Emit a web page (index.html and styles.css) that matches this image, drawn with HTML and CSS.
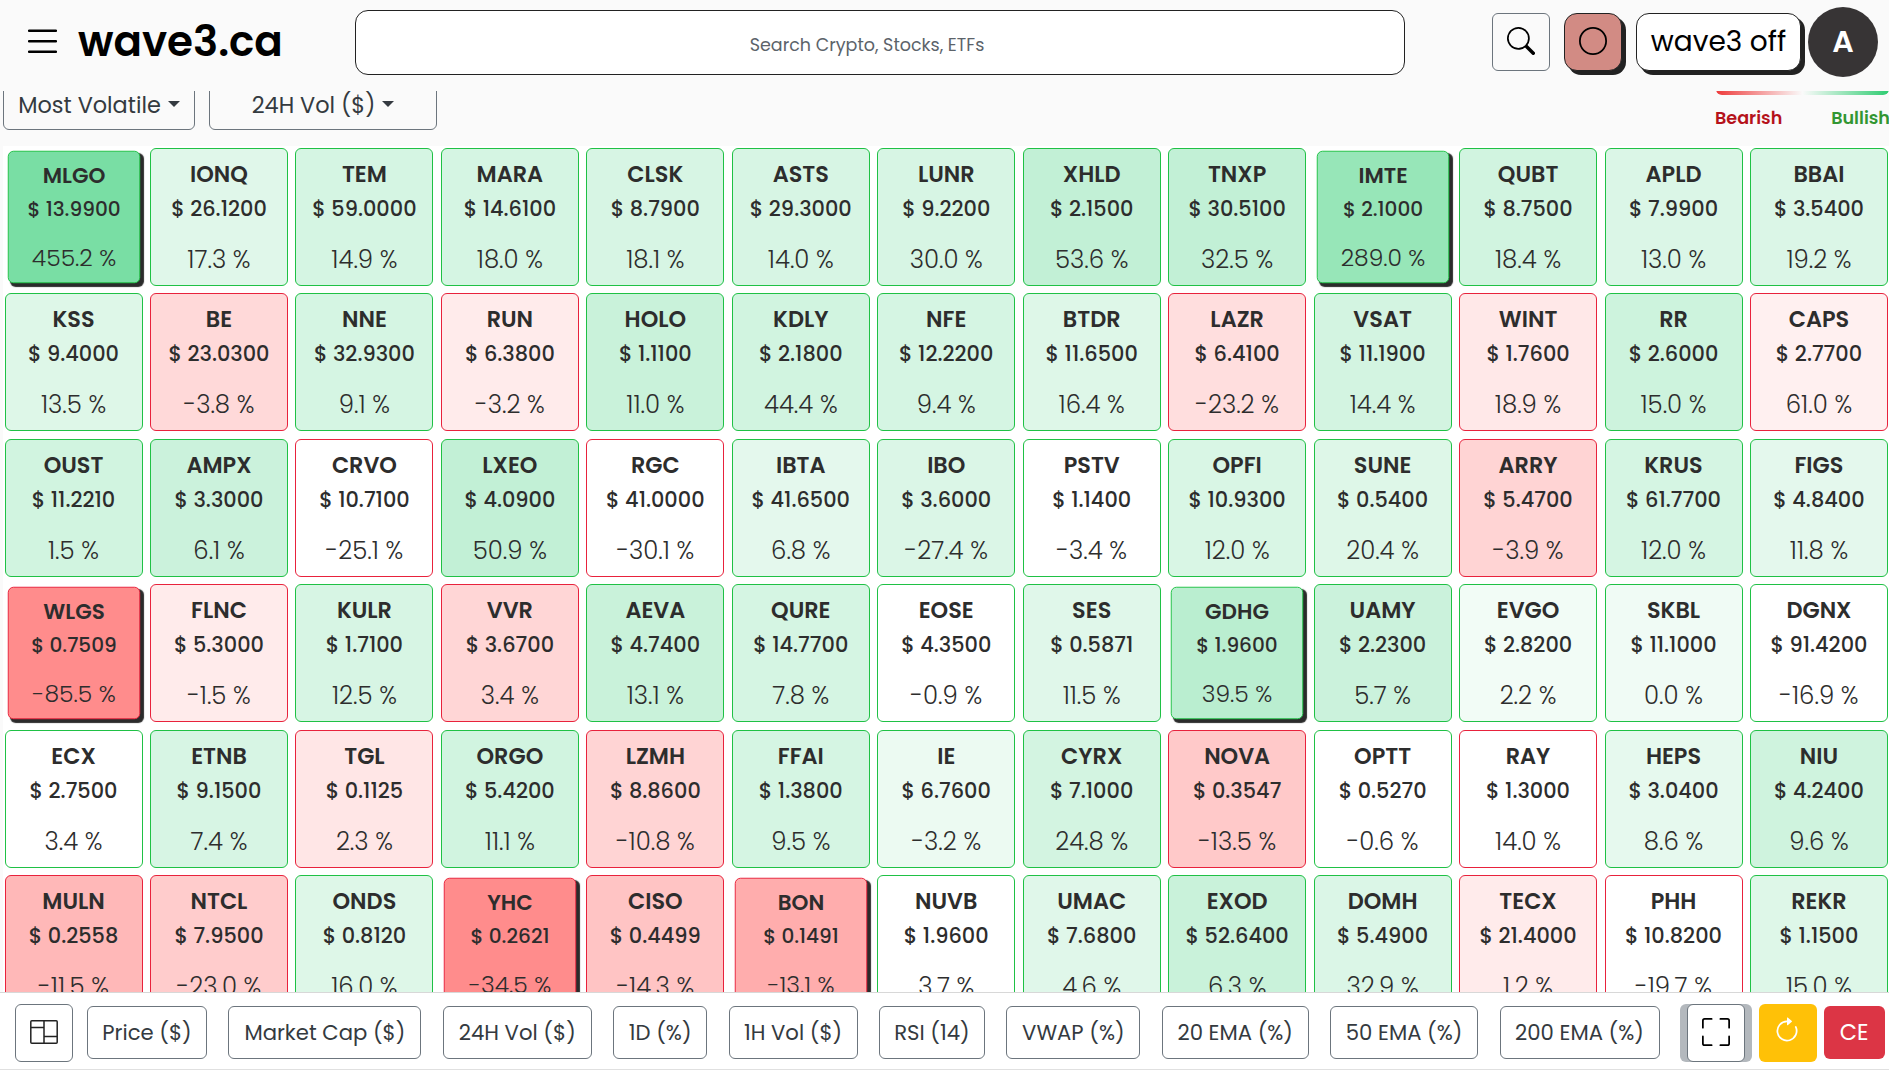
FILE: index.html
```
<!DOCTYPE html>
<html lang="en">
<head>
    <meta charset="UTF-8">
    <meta name="viewport" content="width=device-width, initial-scale=1.0">
    <title>wave3.ca</title>
    <link rel="stylesheet" href="styles.css">
</head>
<body>

<header class="topbar">
    <button class="menu-btn">
        <svg width="29" height="25" viewBox="0 0 29 25"><path d="M1 1.7h27M1 12.2h27M1 22.7h27" stroke="#000" stroke-width="2.4" stroke-linecap="round"/></svg>
    </button>
    <h1 class="logo">wave3.ca</h1>
    <input class="search" type="text" placeholder="Search Crypto, Stocks, ETFs">
    <div class="actions">
        <button class="icon-btn search-btn">
            <svg width="28" height="28" viewBox="0 0 16 16"><path d="M11.742 10.344a6.5 6.5 0 1 0-1.397 1.398h-.001q.044.06.098.115l3.85 3.85a1 1 0 0 0 1.415-1.414l-3.85-3.85a1 1 0 0 0-.115-.1zM12 6.5a5.5 5.5 0 1 1-11 0 5.5 5.5 0 0 1 11 0"/></svg>
        </button>
        <button class="toggle">
            <svg width="28" height="28" viewBox="0 0 16 16"><path d="M8 15A7 7 0 1 1 8 1a7 7 0 0 1 0 14m0 1A8 8 0 1 0 8 0a8 8 0 0 0 0 16"/></svg>
        </button>
        <button class="wave-btn">wave3 off</button>
        <div class="avatar">A</div>
    </div>
</header>

<main class="board">
    <div class="filters">
        <button class="dropdown">Most Volatile</button>
        <button class="dropdown wide">24H Vol ($)</button>
        <div class="legend">
            <div class="legend-bar"></div>
            <div class="legend-text">
                <span class="bearish">Bearish</span>
                <span class="bullish">Bullish</span>
            </div>
        </div>
    </div>
    <div class="heatmap" id="heatmap"></div>
</main>

<footer class="bottombar">
    <button class="icon-btn layout-btn">
        <svg width="28" height="24" viewBox="0 0 28 24" fill="none" stroke="#222" stroke-width="1.5"><rect x=".8" y=".8" width="26.4" height="22.4" rx="1"/><path d="M14 1v22M1 7.500h13M14 16.500h13"/></svg>
    </button>
    <div class="columns">
        <button>Price ($)</button>
        <button>Market Cap ($)</button>
        <button>24H Vol ($)</button>
        <button>1D (%)</button>
        <button>1H Vol ($)</button>
        <button>RSI (14)</button>
        <button>VWAP (%)</button>
        <button>20 EMA (%)</button>
        <button>50 EMA (%)</button>
        <button>200 EMA (%)</button>
    </div>
    <div class="fullscreen">
        <button class="icon-btn">
            <svg width="28" height="28" viewBox="0 0 16 16"><path d="M1.5 1a.5.5 0 0 0-.5.5v4a.5.5 0 0 1-1 0v-4A1.5 1.5 0 0 1 1.500 0h4a.5.5 0 0 1 0 1zM10 .5a.5.5 0 0 1 .5-.5h4A1.500 1.500 0 0 1 16 1.500v4a.5.5 0 0 1-1 0v-4a.5.5 0 0 0-.5-.5h-4a.5.5 0 0 1-.5-.5M.5 10a.5.5 0 0 1 .5.5v4a.5.5 0 0 0 .5.5h4a.5.5 0 0 1 0 1h-4A1.500 1.500 0 0 1 0 14.500v-4a.5.5 0 0 1 .5-.5m15 0a.5.5 0 0 1 .5.5v4a1.500 1.500 0 0 1-1.500 1.500h-4a.5.5 0 0 1 0-1h4a.5.5 0 0 0 .5-.5v-4a.5.5 0 0 1 .5-.5"/></svg>
        </button>
    </div>
    <button class="refresh">
        <svg width="28" height="28" viewBox="0 0 16 16" fill="#fff"><path d="M8 3a5 5 0 1 0 4.546 2.914.5.5 0 0 1 .908-.417A6 6 0 1 1 8 2z"/><path d="M8 4.466V.534a.25.25 0 0 1 .41-.192l2.360 1.966c.12.1.12.284 0 .384L8.410 4.658A.25.25 0 0 1 8 4.466"/></svg>
    </button>
    <button class="clear">CE</button>
</footer>

<script src="script.js"></script>
</body>
</html>
```
FILE: styles.css
```
* {
    box-sizing: border-box;
}

body {
    margin: 0;
    height: 100vh;
    display: flex;
    flex-direction: column;
    overflow: hidden;
    background-color: #fafafa;
    font-family: Poppins, Inter, sans-serif;
    color: #212529;
}

button, input {
    font: inherit;
    color: inherit;
    margin: 0;
    padding: 0;
}

svg {
    display: block;
}

/* top bar */
.topbar {
    flex: none;
    height: 91px;
    display: flex;
    align-items: flex-start;
    padding: 7px 11px 0 28px;
}

.menu-btn {
    margin-top: 22px;
    border: none;
    background: none;
}

.logo {
    width: 277px;
    margin: 8px 0 0 21px;
    font-size: 42px;
    font-weight: 600;
    line-height: 53px;
    color: #000;
}

.search {
    width: 1050px;
    height: 65px;
    margin-top: 3px;
    padding-right: 26px;
    padding-top: 4px;
    border: 1px solid #222;
    border-radius: 13px;
    background-color: #fff;
    font-size: 17.5px;
    text-align: center;
}

.search::placeholder {
    color: #5c636a;
}

.actions {
    display: flex;
    margin-left: auto;
}

.icon-btn {
    width: 58px;
    height: 58px;
    display: flex;
    align-items: center;
    justify-content: center;
    padding-bottom: 3px;
    border: 1px solid #6c757d;
    border-radius: 6px;
    background-color: #fff;
}

.search-btn {
    margin: 6px 14px 0 0;
    padding-bottom: 2px;
    background-color: #fafafa;
}

.toggle {
    width: 58px;
    height: 58px;
    display: flex;
    align-items: center;
    justify-content: center;
    margin: 6px 14px 0 0;
    padding-bottom: 2px;
    border: 1px solid #222;
    border-radius: 13px;
    background-color: #d28b84;
    box-shadow: 4px 4px 0 #222;
}

.wave-btn {
    width: 165px;
    height: 58px;
    margin: 6px 7px 0 0;
    border: 1px solid #222;
    border-radius: 13px;
    background-color: #fff;
    box-shadow: 4px 4px 0 #222;
    color: #000;
    font-size: 28px;
}

.avatar {
    width: 70px;
    height: 70px;
    border-radius: 50%;
    background-color: #373435;
    color: #fff;
    font-size: 30px;
    font-weight: 600;
    line-height: 69px;
    text-align: center;
}

/* filters, scrolled partly under the top bar */
.board {
    flex: 1;
    min-height: 0;
    overflow: hidden;
    padding-left: 3px;
}

.filters {
    display: flex;
    align-items: flex-start;
    height: 70px;
    margin-top: -15px;
}

.dropdown {
    width: 192px;
    height: 54px;
    margin-right: 14px;
    border: 1px solid #6c757d;
    border-radius: 6px;
    background: none;
    color: #343a40;
    font-size: 22.4px;
    padding-top: 4px;
}

.dropdown.wide {
    width: 228px;
}

.dropdown::after {
    content: "";
    display: inline-block;
    margin-left: 7px;
    vertical-align: 6px;
    border-top: 6.5px solid;
    border-left: 6.5px solid transparent;
    border-right: 6.5px solid transparent;
}

.legend {
    width: 173px;
    margin-left: auto;
    font-size: 17.6px;
    font-weight: 600;
}

.legend-bar {
    height: 19px;
    border-radius: 6px;
    background: linear-gradient(to right, #ee3b3b, #fafafa 50%, #2ecc71);
}

.legend-text {
    display: flex;
    justify-content: space-between;
    margin: 0 -1px;
    line-height: 46px;
}

.bearish {
    color: #b5121b;
}

.bullish {
    color: #329632;
}

/* heatmap */
.heatmap {
    display: grid;
    grid-template-columns: repeat(13, 138px);
    grid-auto-rows: 138px;
    gap: 7.4px 7.46px;
    padding: 2px 0 0 1.52px;
    background-color: #fff;
}

.tile {
    padding-top: 8px;
    border: 1px solid #1fc145;
    border-radius: 6px;
    background-color: #fff;
    color: #2d2d2d;
    line-height: 34px;
    text-align: center;
    white-space: nowrap;
}

.tile.down {
    border-color: #e8223c;
}

.tile.alert {
    transform: scale(0.96);
    box-shadow: 3px 3px 1px #2b2b2b;
}

.name {
    font-size: 22.4px;
    font-weight: 600;
}

.price {
    margin-top: 1px;
    font-size: 20.9px;
    font-weight: 500;
}

.change {
    margin-top: 17px;
    font-size: 24.4px;
    font-weight: 300;
}

/* bottom bar */
.bottombar {
    flex: none;
    height: 81px;
    display: flex;
    align-items: center;
    padding: 3px 4px 3px 15px;
    border-top: 1px solid #d8d8d8;
    background: linear-gradient(#e0e0e0, #e0e0e0) 0 76px / 100% 1px no-repeat #fff;
}

.columns {
    display: grid;
    grid-template-columns: 120px 193px 149px 94px 129px 106px 134px 147px 148px 160px;
    gap: 21.4px;
    margin: 0 20px 1px 14px;
}

.columns button {
    height: 53px;
    border: 1px solid #6c757d;
    border-radius: 6px;
    background-color: #fff;
    color: #343a40;
    font-size: 21.2px;
    white-space: nowrap;
}

.fullscreen {
    padding: 0 7px;
    border-radius: 6px;
    background-color: #b3b8bd;
}

.refresh {
    width: 58px;
    height: 58px;
    display: flex;
    align-items: center;
    justify-content: center;
    margin: 0 7px;
    padding: 0 2px 4px 0;
    border: none;
    border-radius: 6px;
    background-color: #ffc107;
}

.clear {
    width: 61px;
    height: 53px;
    margin-bottom: 1px;
    padding-bottom: 2px;
    border: none;
    border-radius: 6px;
    background-color: #dc3545;
    color: #fff;
    font-size: 22.4px;
}
```
FILE: script.js
```
// name, price, change, trend (u/d), strength, alert
const tiles = [
    ['MLGO', '13.9900', '455.2', 'u', 0.64, 1], ['IONQ', '26.1200', '17.3', 'u', 0.15], ['TEM', '59.0000', '14.9', 'u', 0.2],
    ['MARA', '14.6100', '18.0', 'u', 0.2], ['CLSK', '8.7900', '18.1', 'u', 0.19], ['ASTS', '29.3000', '14.0', 'u', 0.19],
    ['LUNR', '9.2200', '30.0', 'u', 0.19], ['XHLD', '2.1500', '53.6', 'u', 0.29], ['TNXP', '30.5100', '32.5', 'u', 0.29],
    ['IMTE', '2.1000', '289.0', 'u', 0.5, 1], ['QUBT', '8.7500', '18.4', 'u', 0.22], ['APLD', '7.9900', '13.0', 'u', 0.17],
    ['BBAI', '3.5400', '19.2', 'u', 0.17],

    ['KSS', '9.4000', '13.5', 'u', 0.16], ['BE', '23.0300', '-3.8', 'd', 0.15], ['NNE', '32.9300', '9.1', 'u', 0.2],
    ['RUN', '6.3800', '-3.2', 'd', 0.08], ['HOLO', '1.1100', '11.0', 'u', 0.26], ['KDLY', '2.1800', '44.4', 'u', 0.22],
    ['NFE', '12.2200', '9.4', 'u', 0.2], ['BTDR', '11.6500', '16.4', 'u', 0.16], ['LAZR', '6.4100', '-23.2', 'd', 0.13],
    ['VSAT', '11.1900', '14.4', 'u', 0.21], ['WINT', '1.7600', '18.9', 'd', 0.09], ['RR', '2.6000', '15.0', 'u', 0.24],
    ['CAPS', '2.7700', '61.0', 'd', 0.06],

    ['OUST', '11.2210', '1.5', 'u', 0.22], ['AMPX', '3.3000', '6.1', 'u', 0.25], ['CRVO', '10.7100', '-25.1', 'd', 0],
    ['LXEO', '4.0900', '50.9', 'u', 0.29], ['RGC', '41.0000', '-30.1', 'd', 0], ['IBTA', '41.6500', '6.8', 'u', 0.13],
    ['IBO', '3.6000', '-27.4', 'u', 0.17], ['PSTV', '1.1400', '-3.4', 'u', 0], ['OPFI', '10.9300', '12.0', 'u', 0.18],
    ['SUNE', '0.5400', '20.4', 'u', 0.16], ['ARRY', '5.4700', '-3.9', 'd', 0.17], ['KRUS', '61.7700', '12.0', 'u', 0.2],
    ['FIGS', '4.8400', '11.8', 'u', 0.13],

    ['WLGS', '0.7509', '-85.5', 'd', 0.45, 1], ['FLNC', '5.3000', '-1.5', 'd', 0.08], ['KULR', '1.7100', '12.5', 'u', 0.19],
    ['VVR', '3.6700', '3.4', 'd', 0.16], ['AEVA', '4.7400', '13.1', 'u', 0.26], ['QURE', '14.7700', '7.8', 'u', 0.2],
    ['EOSE', '4.3500', '-0.9', 'u', 0], ['SES', '0.5871', '11.5', 'u', 0.15], ['GDHG', '1.9600', '39.5', 'u', 0.33, 1],
    ['UAMY', '2.2300', '5.7', 'u', 0.25], ['EVGO', '2.8200', '2.2', 'u', 0.06], ['SKBL', '11.1000', '0.0', 'u', 0.07],
    ['DGNX', '91.4200', '-16.9', 'u', 0],

    ['ECX', '2.7500', '3.4', 'u', 0], ['ETNB', '9.1500', '7.4', 'u', 0.19], ['TGL', '0.1125', '2.3', 'd', 0.1],
    ['ORGO', '5.4200', '11.1', 'u', 0.22], ['LZMH', '8.8600', '-10.8', 'd', 0.17], ['FFAI', '1.3800', '9.5', 'u', 0.2],
    ['IE', '6.7600', '-3.2', 'u', 0.09], ['CYRX', '7.1000', '24.8', 'u', 0.21], ['NOVA', '0.3547', '-13.5', 'd', 0.21],
    ['OPTT', '0.5270', '-0.6', 'u', 0], ['RAY', '1.3000', '14.0', 'd', 0], ['HEPS', '3.0400', '8.6', 'u', 0.12],
    ['NIU', '4.2400', '9.6', 'u', 0.23],

    ['MULN', '0.2558', '-11.5', 'd', 0.28], ['NTCL', '7.9500', '-23.0', 'd', 0.2], ['ONDS', '0.8120', '16.0', 'u', 0.16],
    ['YHC', '0.2621', '-34.5', 'd', 0.45, 1], ['CISO', '0.4499', '-14.3', 'd', 0.23], ['BON', '0.1491', '-13.1', 'd', 0.32, 1],
    ['NUVB', '1.9600', '3.7', 'u', 0], ['UMAC', '7.6800', '4.6', 'u', 0.15], ['EXOD', '52.6400', '6.3', 'u', 0.26],
    ['DOMH', '5.4900', '32.9', 'u', 0.17], ['TECX', '21.4000', '1.2', 'd', 0.08], ['PHH', '10.8200', '-19.7', 'd', 0],
    ['REKR', '1.1500', '15.0', 'u', 0.16]
];

function tint(trend, strength) {
    const base = trend === 'u' ? [46, 204, 113] : [255, 0, 0];
    return 'rgb(' + base.map(c => Math.round(255 - (255 - c) * strength)).join(',') + ')';
}

const heatmap = document.getElementById('heatmap');

tiles.forEach(([name, price, change, trend, strength, alert]) => {
    const tile = document.createElement('div');
    tile.className = 'tile' + (trend === 'd' ? ' down' : '') + (alert ? ' alert' : '');
    tile.style.backgroundColor = tint(trend, strength);
    tile.innerHTML = `
        <div class="name">${name}</div>
        <div class="price">$ ${price}</div>
        <div class="change">${change} %</div>
    `;
    heatmap.appendChild(tile);
});
```
